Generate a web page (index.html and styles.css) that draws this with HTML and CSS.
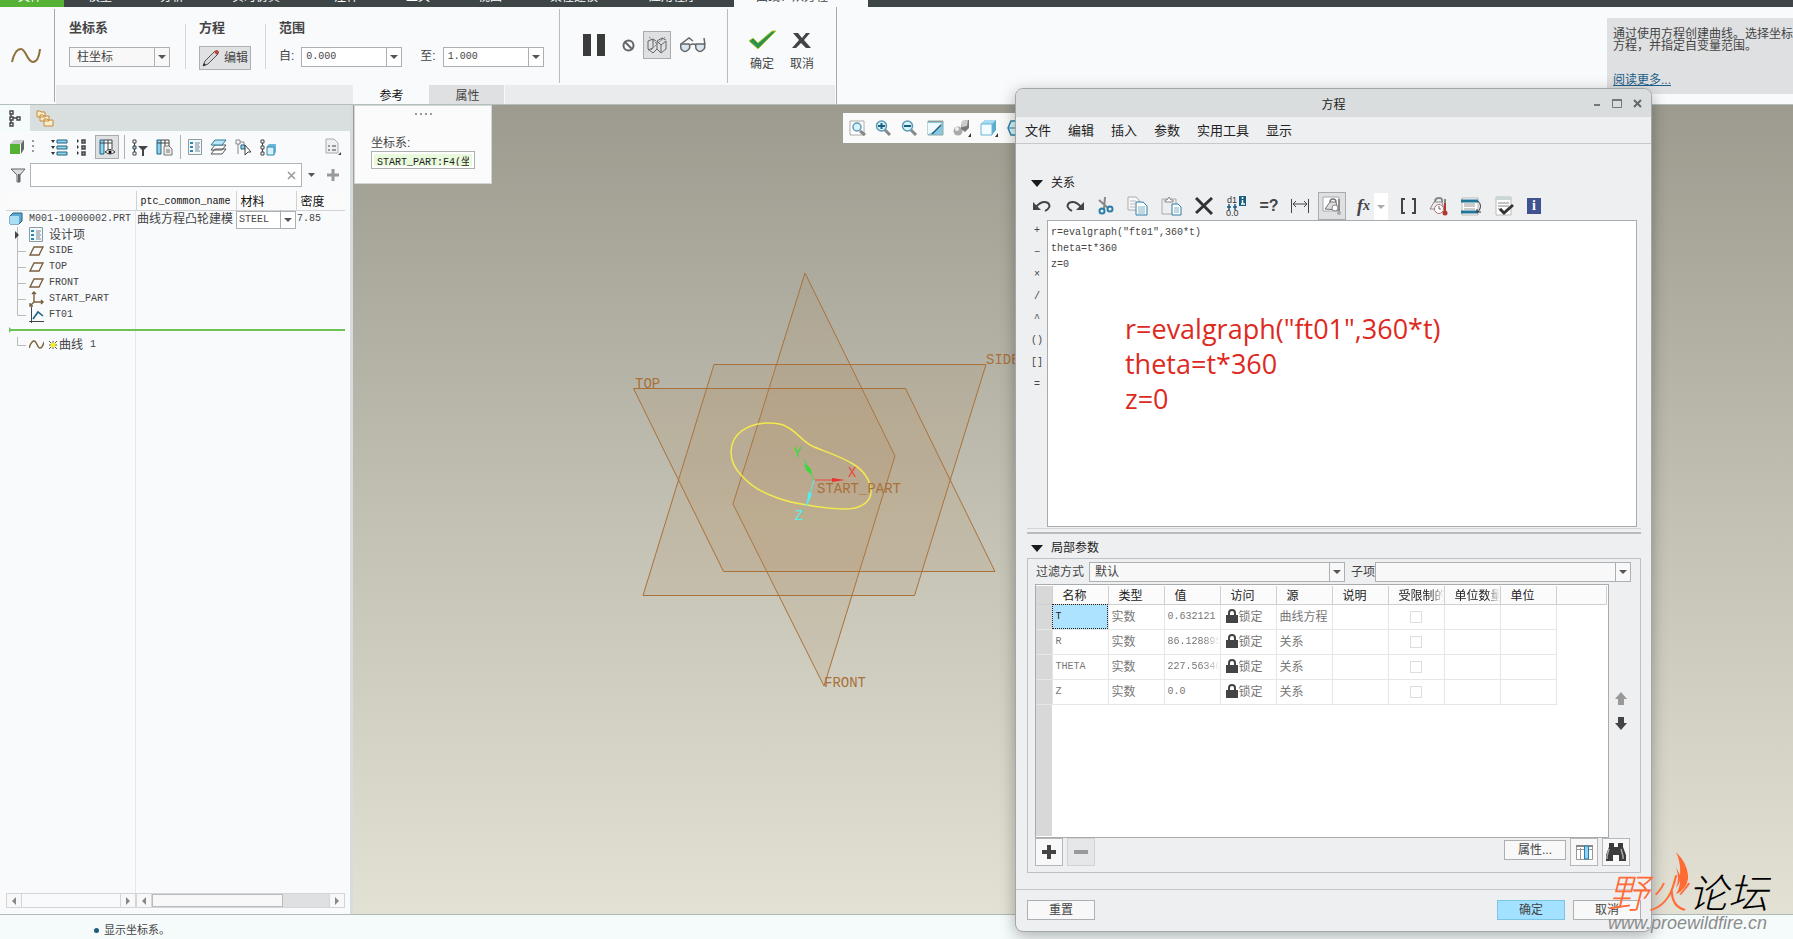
FILE: index.html
```html
<!DOCTYPE html>
<html lang="zh-CN">
<head>
    <meta charset="UTF-8">
    <meta name="viewport" content="width=device-width, initial-scale=1.0">
    <title>曲线：从方程</title>
    <link rel="stylesheet" href="styles.css">
</head>
<body>

<nav class="topbar">
    <a class="top-file" href="#">文件</a>
    <a href="#">模型</a>
    <a href="#">分析</a>
    <a href="#">实时仿真</a>
    <a href="#">注释</a>
    <a href="#">工具</a>
    <a href="#">视图</a>
    <a href="#">柔性建模</a>
    <a href="#">应用程序</a>
    <a class="top-active" href="#">曲线：从方程</a>
</nav>

<header class="ribbon">
    <div class="ribbon-logo">
        <svg width="30" height="16" viewBox="0 0 30 16"><path d="M1 14C3 5 6 1 10 1c5 0 6 13 12 13 4 0 6-4 7-13" fill="none" stroke="#8f6f3c" stroke-width="2"/></svg>
    </div>
    <div class="ribbon-body">
        <div class="groups">
            <div class="group">
                <label class="group-title" for="csys">坐标系</label>
                <div class="group-row">
                    <span class="combo combo-plain"><select id="csys"><option>柱坐标</option></select></span>
                </div>
            </div>
            <div class="group">
                <span class="group-title">方程</span>
                <div class="group-row">
                    <button class="edit-btn" type="button">
                        <svg width="18" height="18" viewBox="0 0 18 18"><path d="M1 17l2-5L13 2l3 3L6 15z" fill="#d8d8d8" stroke="#555"/><path d="M12 3l2-2q3 0 3 3l-2 2z" fill="#b8453a"/><path d="M1 17l1-3 2 2z" fill="#222"/></svg>
                        编辑
                    </button>
                </div>
            </div>
            <div class="group">
                <span class="group-title">范围</span>
                <div class="group-row">
                    <label for="from">自:</label>
                    <span class="combo"><select id="from" class="mono"><option>0.000</option></select></span>
                    <label class="to-label" for="to">至:</label>
                    <span class="combo"><select id="to" class="mono"><option>1.000</option></select></span>
                </div>
            </div>
            <div class="run-group">
                <button class="icon-btn" type="button" aria-label="暂停"><svg width="24" height="22" viewBox="0 0 24 22"><path d="M1 0h8v22H1zM15 0h8v22h-8z" fill="#3b3b3b"/></svg></button>
                <button class="icon-btn" type="button" aria-label="无预览"><svg width="13" height="13" viewBox="0 0 13 13"><g fill="none" stroke="#666" stroke-width="2"><circle cx="6.5" cy="6.5" r="5"/><path d="M3 3l7 7"/></g></svg></button>
                <button class="icon-btn pressed" type="button" aria-label="预览"><svg width="20" height="18" viewBox="0 0 20 18"><g fill="none" stroke="#666"><path d="M1 5l5-2 3 2M1 5v8l5 4 4-4M6 3v9l-5 2M10 5l5-3 4 2M10 5v8l4 4 5-4V5M14 17V9M10 5l4 4 5-4"/><path d="M2 1l8 7 8-7M4 14l12-12" stroke-dasharray="1 1"/></g></svg></button>
                <button class="icon-btn" type="button" aria-label="检查"><svg width="28" height="16" viewBox="0 0 28 16"><g fill="#d9e6ef" stroke="#666" stroke-width="1.5"><path d="M2 7h8q2 4-1 6-3 3-6 0-2-2-1-6zM17 7h8q2 4-1 6-3 3-6 0-2-2-1-6z"/><path d="M2 7l8-6 4 3M11 8q3-2 6 0M26 8l-1-7" fill="none"/></g></svg></button>
            </div>
            <div class="ok-group">
                <button class="tall-btn" type="button">
                    <svg width="30" height="20" viewBox="0 0 30 20"><path d="M2 11l4-3 5 5L25 1h4L11 19z" fill="#2f9150" stroke="#b6cc33"/></svg>
                    确定
                </button>
                <button class="tall-btn" type="button">
                    <svg width="22" height="20" viewBox="0 0 22 20"><path d="M2 3h5l4 5 4-5h4l-6 7 7 8h-5l-5-5-5 5H1l7-8z" fill="#444"/></svg>
                    取消
                </button>
            </div>
        </div>
        <div class="tabstrip">
            <button class="tab tab-on" type="button">参考</button>
            <button class="tab" type="button">属性</button>
        </div>
    </div>
    <aside class="help">
        <p>通过使用方程创建曲线。选择坐标<br>方程，并指定自变量范围。</p>
        <a href="#">阅读更多...</a>
    </aside>
</header>

<main class="workspace">
    <section class="tree-panel">
        <div class="tree-tabs">
            <button class="tree-tab tree-tab-on" type="button" aria-label="模型树"><svg width="12" height="17" viewBox="0 0 12 17"><g fill="none" stroke="#444" stroke-width="1.4"><path d="M1 1h3v3H1zM1 7h3v3H1zM1 13h3v3H1zM8 7h3v3H8zM4 8h4M2 4v3M2 10v3"/></g></svg></button>
            <button class="tree-tab" type="button" aria-label="文件夹"><svg width="18" height="17" viewBox="0 0 18 17"><g fill="#fdeccb" stroke="#c08b3e"><path d="M1 1h3l1 1h4v5H1zM4 5h3l1 1h5v5H4zM8 9h3l1 1h5v6H8z"/></g></svg></button>
        </div>
        <div class="tree-tools">
            <svg width="14" height="14" viewBox="0 0 14 14"><path d="M0 4l4-4h10l-3 4z" fill="#ccc"/><path d="M11 4l3-4v9l-3 5z" fill="#666"/><path d="M0 4h10v10H0z" fill="#55b234"/></svg>
            <svg width="4" height="16" viewBox="0 0 4 16"><path d="M2 1v15" stroke="#999" stroke-width="2" stroke-dasharray="2 3"/></svg>
            <button class="icon-btn push" type="button" aria-label="全部展开"><svg width="17" height="17" viewBox="0 0 17 17"><path d="M6 1h10v3H6zM6 7h10v3H6zM6 13h10v3H6z" fill="#8ed4f2" stroke="#24607c"/><path d="M0 1h4L2 4zM0 7h4l-2 3zM0 13h4l-2 3z" fill="#333"/></svg></button>
            <button class="icon-btn" type="button" aria-label="全部折叠"><svg width="11" height="17" viewBox="0 0 11 17"><path d="M6 1h3v3H6zM6 7h3v3H6zM6 13h3v3H6z" fill="#aaa" stroke="#444" stroke-width="1.5"/><path d="M1 0l2 2-2 2zM1 6l2 2-2 2zM1 12l2 2-2 2z" fill="#333"/></svg></button>
            <button class="icon-btn pressed" type="button" aria-label="树列"><svg width="17" height="17" viewBox="0 0 17 17"><path d="M1 1h12v14H1z" fill="#fff"/><path d="M1 1h4v14H1z" fill="#8ed4f2" stroke="#24607c"/><path d="M5 1h8v9M9 1v10M1 4h12" fill="none" stroke="#444"/><path d="M6 13q5-5 10 0-5 4-10 0z" fill="#eee" stroke="#333"/><circle cx="11" cy="13" r="1.5"/></svg></button>
            <i class="vline"></i>
            <button class="icon-btn" type="button" aria-label="树过滤器"><svg width="16" height="17" viewBox="0 0 16 17"><g fill="#fff" stroke="#444"><path d="M1 1h3v3H1zM1 13h3v3H1zM2.5 4v3M2.5 10v3"/><path d="M1 7h3v3H1z" fill="#8ed4f2"/></g><path d="M6 7h10l-4 4v6h-2v-6z" fill="#444"/></svg></button>
            <button class="icon-btn" type="button" aria-label="列设置"><svg width="17" height="17" viewBox="0 0 17 17"><path d="M1 1h12v13H1z" fill="#fff"/><path d="M1 1h4v14H1z" fill="#8ed4f2" stroke="#24607c"/><path d="M5 1h8v6M9 1v6M1 4h12" fill="none" stroke="#444"/><path d="M8 7h5l3 3v6H8z" fill="#eee" stroke="#777"/><path d="M10 11h4M10 13h4" stroke="#777"/></svg></button>
            <i class="vline"></i>
            <button class="icon-btn" type="button" aria-label="设计项"><svg width="14" height="16" viewBox="0 0 14 16"><path d="M.5.5h13v15H.5z" fill="#f4f8f9" stroke="#8b9ba3"/><path d="M2 3h3v2H2zM2 7h3v2H2zM2 11h3v2H2z" fill="#2c88b5"/><path d="M7 4h5M7 6h4M7 8h5M7 10h4M7 12h5" stroke="#789"/></svg></button>
            <button class="icon-btn" type="button" aria-label="层"><svg width="17" height="16" viewBox="0 0 17 16"><g fill="#fff" stroke="#555"><path d="M5 10h11l-4 5H1zM5 6h11l-4 5H1z"/><path d="M5 1h11l-4 5H1z" fill="#bce6f8" stroke="#2c7c9d"/></g></svg></button>
            <button class="icon-btn" type="button" aria-label="选择"><svg width="17" height="17" viewBox="0 0 17 17"><g fill="none" stroke="#888"><path d="M1 1h4v4H1zM3 5v10M5 3h4v3"/></g><path d="M6 6h4v4H6z" fill="#8ed4f2" stroke="#24607c"/><path d="M10 6v10l3-3h3z" fill="#fff" stroke="#444"/></svg></button>
            <button class="icon-btn" type="button" aria-label="零件"><svg width="17" height="17" viewBox="0 0 17 17"><g fill="none" stroke="#444"><path d="M1 1h3v3H1zM1 7h3v3H1zM1 13h3v3H1zM2.5 4v3M2.5 10v3"/></g><path d="M7 7l2-2h7v8l-2 3H7z" fill="#6db8da"/><path d="M7 8h7v8H7z" fill="#d8f1fb" stroke="#3188ad"/></svg></button>
            <button class="icon-btn last" type="button" aria-label="显示"><svg width="17" height="18" viewBox="0 0 17 18"><path d="M1 1h8l4 4v10H1z" fill="#eef0f1" stroke="#aaa"/><path d="M3 8h2M3 12h2M7 8h4M7 12h4" stroke="#999" stroke-width="2"/><path d="M16 14v3h-3z" fill="#444"/></svg></button>
        </div>
        <div class="tree-filter">
            <svg width="16" height="15" viewBox="0 0 16 15"><path d="M1 1h14l-5 6v7H7V7z" fill="#ddd" stroke="#666"/><path d="M8 6h2v8H8z" fill="#666"/></svg>
            <span class="filter-box"><input type="text" aria-label="过滤"><button class="icon-btn" type="button" aria-label="清除"><svg width="9" height="9" viewBox="0 0 9 9"><path d="M1 1l7 7M8 1L1 8" stroke="#999" stroke-width="1.5"/></svg></button></span>
            <svg width="7" height="5" viewBox="0 0 7 5"><path d="M0 0h7L3.5 4z" fill="#555"/></svg>
            <svg width="12" height="12" viewBox="0 0 12 12"><path d="M6 0v12M0 6h12" stroke="#999" stroke-width="3"/></svg>
        </div>
        <div class="tree-body">
            <table class="tree">
                <colgroup><col class="c-name"><col class="c-common"><col class="c-mat"><col></colgroup>
                <thead>
                <tr><th></th><th class="mono">ptc_common_name</th><th>材料</th><th>密度</th></tr>
                </thead>
                <tbody>
                <tr>
                    <td class="mono root"><div><svg width="14" height="13" viewBox="0 0 14 13"><path d="M1 4l3-3h9v8l-3 3H1z" fill="#5aa9cf" stroke="#24607c"/><path d="M1 4h9v8H1z" fill="#a9def5"/></svg>M001-10000002.PRT</div></td>
                    <td>曲线方程凸轮建模</td>
                    <td class="mat"><span class="combo"><select class="mono" aria-label="材料"><option>STEEL</option></select></span></td>
                    <td class="mono">7.85</td>
                </tr>
                <tr><td colspan="4"><div class="node"><svg class="branch" width="12" height="16" viewBox="0 0 12 16"><path d="M3.5 0v16" stroke="#bbb"/><path d="M1 4l4 4-4 4z" fill="#444"/></svg><svg width="15" height="15" viewBox="0 0 15 15"><path d="M.5.5h13v14H.5z" fill="#f4f8f9" stroke="#8b9ba3"/><path d="M2 3h3v2H2zM2 7h3v2H2zM2 11h3v2H2z" fill="#2c88b5"/><path d="M7 4h5M7 6h4M7 8h5M7 10h4M7 12h5" stroke="#789"/></svg>设计项</div></td></tr>
                <tr><td colspan="4" class="mono"><div class="node"><svg class="branch" width="12" height="16" viewBox="0 0 12 16"><path d="M3.5 0v16M3.5 8.5H12" fill="none" stroke="#bbb"/></svg><svg width="15" height="12" viewBox="0 0 15 12"><path d="M1 10l4-8h9l-4 8z" fill="none" stroke="#7b603c" stroke-width="1.4"/></svg>SIDE</div></td></tr>
                <tr><td colspan="4" class="mono"><div class="node"><svg class="branch" width="12" height="16" viewBox="0 0 12 16"><path d="M3.5 0v16M3.5 8.5H12" fill="none" stroke="#bbb"/></svg><svg width="15" height="12" viewBox="0 0 15 12"><path d="M1 10l4-8h9l-4 8z" fill="none" stroke="#7b603c" stroke-width="1.4"/></svg>TOP</div></td></tr>
                <tr><td colspan="4" class="mono"><div class="node"><svg class="branch" width="12" height="16" viewBox="0 0 12 16"><path d="M3.5 0v16M3.5 8.5H12" fill="none" stroke="#bbb"/></svg><svg width="15" height="12" viewBox="0 0 15 12"><path d="M1 10l4-8h9l-4 8z" fill="none" stroke="#7b603c" stroke-width="1.4"/></svg>FRONT</div></td></tr>
                <tr><td colspan="4" class="mono"><div class="node"><svg class="branch" width="12" height="16" viewBox="0 0 12 16"><path d="M3.5 0v16M3.5 8.5H12" fill="none" stroke="#bbb"/></svg><svg width="15" height="16" viewBox="0 0 15 16"><path d="M5 1v10h9M5 11l-4 4M3 3l2-2 2 2M12 9l2 2-2 2M1 12v3h3" fill="none" stroke="#7b603c" stroke-width="1.4"/></svg>START_PART</div></td></tr>
                <tr><td colspan="4" class="mono"><div class="node"><svg class="branch" width="12" height="16" viewBox="0 0 12 16"><path d="M3.5 0v8.5H12" fill="none" stroke="#bbb"/></svg><svg width="15" height="16" viewBox="0 0 15 16"><path d="M2.5 0v16M0 14.5h15" stroke="#444"/><path d="M4 12l5-7 5 4" fill="none" stroke="#1d6384" stroke-width="1.6"/></svg>FT01</div></td></tr>
                <tr class="insert-row"><td colspan="4"><div class="insert-line"></div></td></tr>
                <tr><td colspan="4"><div class="node"><svg class="branch" width="12" height="16" viewBox="0 0 12 16"><path d="M3.5 0v8.5H12" fill="none" stroke="#bbb"/></svg><svg width="15" height="10" viewBox="0 0 15 10"><path d="M0 8C2 2 4 1 5 1c3 0 3 7 6 7 2 0 3-2 4-6" fill="none" stroke="#7b603c" stroke-width="1.4"/></svg><span class="new-curve"><svg width="8" height="8" viewBox="0 0 8 8"><path d="M0 0l8 8M8 0L0 8M4 0v8M0 4h8" stroke="#555"/><circle cx="4" cy="4" r="2.5" fill="#f6ee22"/></svg>曲线 <span class="mono">1</span></span></div></td></tr>
                </tbody>
            </table>
        </div>
        <div class="scrollbars">
            <div class="sb sb-off"><i class="sb-left"></i><b></b><i class="sb-right"></i></div>
            <div class="sb"><i class="sb-left"></i><b><span></span></b><i class="sb-right"></i></div>
        </div>
    </section>

    <section class="viewport">
        <svg class="scene" width="100%" height="100%">
            <!-- datum planes -->
            <g transform="translate(-353 -105)">
                <g fill="#b5824c" fill-opacity=".13" stroke="#a9713a">
                    <path d="M805 273l90 183-71 230-91-182z"/>
                    <path d="M714 364.5h272l-71.5 231H643z"/>
                    <path d="M633.5 388.5h272l89.5 183H723.5z"/>
                </g>
                <path d="M768 423C776 423 783 424 787 427C796 431 801 440 812 446C823 451 840 456 853 464C863 470 871 480 871 492C871 501 862 509 845 509C830 509 818 507 807 505C793 503 781 500 770 495C757 490 749 484 742 476C735 469 731 461 731 452C731 433 749 423 768 423Z" fill="none" stroke="#f3e84f" stroke-width="1.5"/>
                <path d="M815 480h20" stroke="#e8483c"/><path d="M832 478l13 2-13 2z" fill="#e8342a"/>
                <path d="M814 480l-10-21" stroke="#35dd3a" stroke-dasharray="2 1"/><path d="M804 463l7 6 1 6-6-5z" fill="#35dd3a"/>
                <path d="M814 480l-8 26" stroke="#4ff0ee"/><path d="M808 492l4 2-5 12z" fill="#4ff0ee"/>
                <g class="labels">
                    <text x="635" y="388">TOP</text>
                    <text x="986" y="364">SIDE</text>
                    <text x="824" y="687">FRONT</text>
                    <text x="817" y="493">START_PART</text>
                    <text x="793" y="457" class="ax-y">Y</text>
                    <text x="848" y="477" class="ax-x">X</text>
                    <text x="795" y="520" class="ax-z">Z</text>
                </g>
            </g>
        </svg>

        <div class="ref-panel">
            <svg width="17" height="2" viewBox="0 0 17 2"><path d="M0 1h17" stroke="#999" stroke-width="2" stroke-dasharray="2 3"/></svg>
            <label for="refcsys">坐标系:</label>
            <input id="refcsys" class="mono" type="text" value="START_PART:F4(坐">
        </div>

        <div class="view-tools">
            <button class="icon-btn" type="button" aria-label="重新调整"><svg width="17" height="16" viewBox="0 0 17 16"><path d="M1 1h14v14H1z" fill="#fff" stroke="#aaa"/><path d="M11 11l5 4" stroke="#888" stroke-width="3"/><circle cx="8" cy="7" r="4" fill="#d9f3fc" stroke="#5a99b5" stroke-width="1.5"/></svg></button>
            <button class="icon-btn" type="button" aria-label="放大"><svg width="17" height="16" viewBox="0 0 17 16"><path d="M10 10l5 5" stroke="#888" stroke-width="3"/><circle cx="6.5" cy="6" r="5" fill="#d9f3fc" stroke="#5a99b5" stroke-width="1.5"/><path d="M3 6h7M6.5 3v6" stroke="#1c5e80" stroke-width="2"/></svg></button>
            <button class="icon-btn" type="button" aria-label="缩小"><svg width="17" height="16" viewBox="0 0 17 16"><path d="M10 10l5 5" stroke="#888" stroke-width="3"/><circle cx="6.5" cy="6" r="5" fill="#d9f3fc" stroke="#5a99b5" stroke-width="1.5"/><path d="M3 6h7" stroke="#1c5e80" stroke-width="2"/></svg></button>
            <button class="icon-btn" type="button" aria-label="重画"><svg width="17" height="16" viewBox="0 0 17 16"><path d="M1 1h15v14H1z" fill="#8cc6de" stroke="#8aa"/><path d="M1 3h13Q13 9 2 14H1z" fill="#eefaff"/><path d="M1 1.500h15" stroke="#999"/><path d="M5 14l9-9" stroke="#1c5e80" stroke-width="1.5"/></svg></button>
            <button class="icon-btn" type="button" aria-label="渲染"><svg width="18" height="18" viewBox="0 0 18 18"><circle cx="5" cy="12" r="4.5" fill="#aaa"/><circle cx="4" cy="10" r="2" fill="#eee"/><path d="M9 2l7-1v8l-4 4-4-3z" fill="#777"/><path d="M9 2l6-1-1 6-5 1z" fill="#ccc"/><path d="M18 14v4h-3z" fill="#333"/></svg></button>
            <button class="icon-btn" type="button" aria-label="显示样式"><svg width="18" height="18" viewBox="0 0 18 18"><path d="M1 5l4-4h11v10l-4 5H1z" fill="#5eaccf"/><path d="M1 5l4-4h11l-4 4z" fill="#a6dbf1"/><path d="M1 5h11v11H1z" fill="#f2fbff" stroke="#68b6d6"/><path d="M18 14v4h-3z" fill="#333"/></svg></button>
            <button class="icon-btn" type="button" aria-label="视图"><svg width="18" height="16" viewBox="0 0 18 16"><path d="M4 1h12v14H4L1 8z" fill="#d9f3fc" stroke="#2e84a9" stroke-width="1.5"/><path d="M1 8h17" stroke="#2e84a9"/></svg></button>
        </div>
    </section>
</main>

<footer class="status"><i></i>显示坐标系。</footer>

<section class="dialog">
    <div class="dlg-title">
        <span>方程</span>
        <div class="dlg-win">
            <svg width="8" height="10" viewBox="0 0 8 10"><path d="M1 6h6" stroke="#777" stroke-width="2"/></svg>
            <svg width="10" height="9" viewBox="0 0 10 9"><path d="M.5 1v7.5h9V1" fill="none" stroke="#777"/><path d="M0 1h10" stroke="#777" stroke-width="2"/></svg>
            <svg width="9" height="9" viewBox="0 0 9 9"><path d="M1 1l7 7M8 1L1 8" stroke="#666" stroke-width="2"/></svg>
        </div>
    </div>
    <nav class="dlg-menu"><a href="#">文件</a><a href="#">编辑</a><a href="#">插入</a><a href="#">参数</a><a href="#">实用工具</a><a href="#">显示</a></nav>

    <div class="dlg-content">
        <h2 class="sec sec-rel"><svg width="12" height="7" viewBox="0 0 12 7"><path d="M0 0h12L6 7z" fill="#1a1a1a"/></svg>关系</h2>
        <div class="rel-tools">
            <button class="icon-btn" type="button" aria-label="撤消"><svg width="20" height="14" viewBox="0 0 20 14"><path d="M4 8q6-7 12-4 4 4-3 8" fill="none" stroke="#444" stroke-width="2"/><path d="M1 3v8h8z" fill="#444"/></svg></button>
            <button class="icon-btn" type="button" aria-label="重做"><svg width="20" height="14" viewBox="0 0 20 14"><path d="M16 8q-6-7-12-4-4 4 3 8" fill="none" stroke="#444" stroke-width="2"/><path d="M19 3v8h-8z" fill="#444"/></svg></button>
            <button class="icon-btn" type="button" aria-label="剪切"><svg width="16" height="18" viewBox="0 0 16 18"><path d="M1 3l9 8M7 0L6 12" stroke="#888" stroke-width="2"/><g fill="none" stroke="#2a7da6" stroke-width="2"><circle cx="4" cy="14" r="2.5"/><circle cx="12" cy="12" r="2.5"/></g></svg></button>
            <button class="icon-btn" type="button" aria-label="复制"><svg width="21" height="20" viewBox="0 0 21 20"><path d="M1 1h8l3 3v10H1z" fill="#f8f8f8" stroke="#aaa"/><path d="M3 5h6M3 8h5M3 11h5" stroke="#bbb"/><path d="M9 6h7l4 4v9H9z" fill="#fff" stroke="#2a7da6"/><path d="M11 11h7M11 13h7M11 15h7M11 17h7" stroke="#7fb2ca"/></svg></button>
            <button class="icon-btn" type="button" aria-label="粘贴"><svg width="21" height="20" viewBox="0 0 21 20"><path d="M1 3h14v15H1z" fill="#eee" stroke="#aaa"/><path d="M4 4h2l2-3 2 3h2v2H4z" fill="#fff" stroke="#888"/><path d="M11 8h6l3 3v8h-9z" fill="#fff" stroke="#2a7da6"/><path d="M13 12h5M13 14h5M13 16h5" stroke="#7fb2ca"/></svg></button>
            <button class="icon-btn" type="button" aria-label="删除"><svg width="18" height="18" viewBox="0 0 18 18"><path d="M1 1l16 16M17 1L1 16" stroke="#333" stroke-width="3"/></svg></button>
            <button class="icon-btn" type="button" aria-label="切换尺寸"><svg width="21" height="20" viewBox="0 0 21 20"><text x="1" y="7" class="svg-s">d1</text><text x="0" y="20" class="svg-s">0.0</text><path d="M3 8v6M9 8v6M1 11h4M7 11h4" stroke="#1c5e80" stroke-width="1.5"/><path d="M13 0h7v10h-7z" fill="#1c5e80"/><path d="M15 8h4M16.5 4v4M16.5 1v2" stroke="#fff" stroke-width="1.5"/></svg></button>
            <button class="icon-btn eq" type="button">=?</button>
            <button class="icon-btn" type="button" aria-label="尺寸"><svg width="18" height="16" viewBox="0 0 18 16"><path d="M.5 1v14M17.5 1v14M2 6h14M5 3L2 6l3 3M13 3l3 3-3 3" fill="none" stroke="#444"/></svg></button>
            <button class="icon-btn pressed" type="button" aria-label="单位"><svg width="20" height="20" viewBox="0 0 20 20"><path d="M1 1h16v14H1z" fill="#fff" stroke="#aaa"/><path d="M3 13L8 6h6l2 8z" fill="#ddd" stroke="#777"/><path d="M8 6q0-3 3-3t3 3M17 3v13" fill="none" stroke="#777" stroke-width="1.5"/><circle cx="13" cy="12" r="3" fill="#fff" stroke="#888"/><circle cx="17" cy="17" r="2" fill="#aaa"/></svg></button>
            <span class="fx"><button class="icon-btn" type="button">f<small>x</small></button><svg width="14" height="27" viewBox="0 0 14 27"><path d="M0 0h14v27H0z" fill="#fff"/><path d="M3 12h8l-4 4z" fill="#aaa"/></svg></span>
            <button class="icon-btn" type="button" aria-label="括号"><svg width="15" height="16" viewBox="0 0 15 16"><path d="M4 1H1v14h3M11 1h3v14h-3" fill="none" stroke="#444" stroke-width="2"/></svg></button>
            <button class="icon-btn" type="button" aria-label="单位转换"><svg width="19" height="19" viewBox="0 0 19 19"><path d="M1 12l4-7h8l2 7z" fill="#eee" stroke="#888"/><path d="M6 5q0-4 4-4t3 4M16 2v5" fill="none" stroke="#888" stroke-width="2"/><circle cx="10" cy="12" r="4.5" fill="#fff" stroke="#a77"/><path d="M10 9v3h2" fill="none" stroke="#666"/><path d="M16 6v10" stroke="#b5382c" stroke-width="2"/><circle cx="16" cy="16" r="2.5" fill="#b5382c"/></svg></button>
            <button class="icon-btn" type="button" aria-label="排序"><svg width="21" height="19" viewBox="0 0 21 19"><path d="M1 1h16v17H1z" fill="#fff" stroke="#bbb"/><path d="M0 4h17M0 15h17" stroke="#1f7595" stroke-width="3"/><path d="M3 7h11M3 9h11M3 12h11" stroke="#999"/><path d="M17 4q5 5 0 11M16 12v3h4" fill="none" stroke="#333"/></svg></button>
            <button class="icon-btn" type="button" aria-label="校验"><svg width="19" height="20" viewBox="0 0 19 20"><path d="M1 1h15v18H1z" fill="#fff" stroke="#bbb"/><path d="M1 1h15v3H1z" fill="#ccd6d8"/><path d="M3 7h11M3 10h11M3 13h4" stroke="#888"/><path d="M5 13l4 4 9-8" fill="none" stroke="#333" stroke-width="3"/></svg></button>
            <button class="icon-btn info" type="button">i</button>
        </div>
        <div class="editor">
            <div class="ops"><button type="button">+</button><button type="button">−</button><button type="button">×</button><button type="button">/</button><button type="button">^</button><button type="button">()</button><button type="button">[]</button><button type="button">=</button></div>
            <textarea class="mono" aria-label="关系" spellcheck="false">r=evalgraph("ft01",360*t)
theta=t*360
z=0</textarea>
            <div class="note">r=evalgraph("ft01",360*t)<br>theta=t*360<br>z=0</div>
        </div>
        <div class="splitter"></div>
        <h2 class="sec sec-par"><svg width="12" height="7" viewBox="0 0 12 7"><path d="M0 0h12L6 7z" fill="#1a1a1a"/></svg>局部参数</h2>
        <div class="params">
            <div class="filters">
                <label for="filter">过滤方式</label>
                <span class="combo combo-plain"><select id="filter"><option>默认</option></select></span>
                <label class="child-label" for="child">子项</label>
                <span class="combo combo-plain"><select id="child"><option></option></select></span>
            </div>
            <div class="grid-row">
                <div class="grid-box">
                    <table class="grid">
                        <colgroup><col class="g-gut"><col class="g-c" span="9"><col></colgroup>
                        <thead>
                        <tr><th class="gut"></th><th>名称</th><th>类型</th><th>值</th><th>访问</th><th>源</th><th>说明</th><th><div class="fade">受限制的</div></th><th><div class="fade">单位数量</div></th><th>单位</th><th></th></tr>
                        </thead>
                        <tbody>
                        <tr><td class="gut"></td><td class="mono sel">T</td><td>实数</td><td class="mono">0.632121</td><td><svg class="lock" width="12" height="14" viewBox="0 0 12 14"><path d="M3 7V4q0-3 3-3t3 3v3" fill="none" stroke="#444" stroke-width="2"/><path d="M0 6h12v8H0z" fill="#444"/></svg>锁定</td><td>曲线方程</td><td></td><td class="chk"><input type="checkbox" disabled aria-label="受限制的"></td><td></td><td></td><td class="rest"></td></tr>
                        <tr><td class="gut"></td><td class="mono">R</td><td>实数</td><td class="mono"><div class="fade">86.128895</div></td><td><svg class="lock" width="12" height="14" viewBox="0 0 12 14"><path d="M3 7V4q0-3 3-3t3 3v3" fill="none" stroke="#444" stroke-width="2"/><path d="M0 6h12v8H0z" fill="#444"/></svg>锁定</td><td>关系</td><td></td><td class="chk"><input type="checkbox" disabled aria-label="受限制的"></td><td></td><td></td><td class="rest"></td></tr>
                        <tr><td class="gut"></td><td class="mono">THETA</td><td>实数</td><td class="mono"><div class="fade">227.563402</div></td><td><svg class="lock" width="12" height="14" viewBox="0 0 12 14"><path d="M3 7V4q0-3 3-3t3 3v3" fill="none" stroke="#444" stroke-width="2"/><path d="M0 6h12v8H0z" fill="#444"/></svg>锁定</td><td>关系</td><td></td><td class="chk"><input type="checkbox" disabled aria-label="受限制的"></td><td></td><td></td><td class="rest"></td></tr>
                        <tr><td class="gut"></td><td class="mono">Z</td><td>实数</td><td class="mono">0.0</td><td><svg class="lock" width="12" height="14" viewBox="0 0 12 14"><path d="M3 7V4q0-3 3-3t3 3v3" fill="none" stroke="#444" stroke-width="2"/><path d="M0 6h12v8H0z" fill="#444"/></svg>锁定</td><td>关系</td><td></td><td class="chk"><input type="checkbox" disabled aria-label="受限制的"></td><td></td><td></td><td class="rest"></td></tr>
                        </tbody>
                    </table>
                </div>
                <div class="movers">
                    <button class="icon-btn" type="button" aria-label="上移"><svg width="12" height="13" viewBox="0 0 12 13"><path d="M6 0l6 7H9v6H3V7H0z" fill="#999"/></svg></button>
                    <button class="icon-btn" type="button" aria-label="下移"><svg width="12" height="13" viewBox="0 0 12 13"><path d="M6 13l6-7H9V0H3v6H0z" fill="#444"/></svg></button>
                </div>
            </div>
            <div class="grid-tools">
                <button class="sq" type="button" aria-label="添加"><svg width="14" height="14" viewBox="0 0 14 14"><path d="M7 0v14M0 7h14" stroke="#444" stroke-width="4"/></svg></button>
                <button class="sq sq-off" type="button" aria-label="移除" disabled><svg width="14" height="14" viewBox="0 0 14 14"><path d="M0 7h14" stroke="#999" stroke-width="4"/></svg></button>
                <button class="btn props" type="button">属性...</button>
                <button class="sq" type="button" aria-label="列"><svg width="17" height="15" viewBox="0 0 17 15"><path d="M.5.5h16v14H.5z" fill="#fff" stroke="#999"/><path d="M0 1h17" stroke="#888" stroke-width="2"/><path d="M0 4.500h17M4.500 3v12" stroke="#999"/><path d="M8.500 1h4v13h-4z" fill="#8ed4f2" stroke="#2a7da6"/></svg></button>
                <button class="sq sq-find" type="button" aria-label="查找"><svg width="20" height="18" viewBox="0 0 20 18"><path d="M3 0h5v4h4V0h5v4l3 8v6h-7v-6H7v6H0v-6l3-8z" fill="#3c3c3c"/><path d="M3 6l-2 7v3M15 6l2 7v3" stroke="#aaa" stroke-width="1.5" fill="none"/></svg></button>
            </div>
        </div>
    </div>
    <div class="dlg-foot">
        <button class="btn" type="button">重置</button>
        <button class="btn btn-ok" type="button">确定</button>
        <button class="btn" type="button">取消</button>
    </div>
</section>

<div class="watermark">
    <div class="wm-name"><span>野火</span>论坛</div>
    <svg class="flame" width="16" height="42" viewBox="0 0 16 42"><path d="M4 0q13 13 12 27-2 11-12 15 4-6 4-13-2 5-4 7 4-10 0-21l4 8Q9 11 4 0z" fill="#ff6b35"/></svg>
    <div class="wm-url">www.proewildfire.cn</div>
</div>

</body>
</html>
```
FILE: styles.css
```css
* {
    box-sizing: border-box;
}
body {
    margin: 0;
    height: 100vh;
    display: flex;
    flex-direction: column;
    overflow: hidden;
    position: relative;
    background: #f8fafc;
    color: #444;
    font-family: "Liberation Sans", "Noto Sans CJK SC", sans-serif;
    font-size: 12px;
    line-height: 16px;
}
svg {
    display: block;
    flex: none;
}
button, select, input, textarea {
    font: inherit;
    color: inherit;
}
button {
    padding: 0;
    cursor: pointer;
}
.mono {
    font-family: "Liberation Mono", "Noto Sans CJK SC", monospace;
    font-size: 10px;
}
.icon-btn {
    border: 0;
    background: none;
    display: flex;
    align-items: center;
    justify-content: center;
}
.pressed {
    background: #dfe0e2;
    border: 1px solid #a9abad;
}

/* 下拉框 */
.combo {
    position: relative;
    display: block;
    width: 101px;
    height: 20px;
}
.combo select {
    appearance: none;
    width: 100%;
    height: 100%;
    padding: 0 20px 0 4px;
    border: 1px solid #adb0b3;
    border-radius: 0;
    background: #fff;
}
.combo-plain select {
    padding-left: 7px;
    background: #f8f8f8;
}
.combo::before {
    content: "";
    position: absolute;
    right: 15px;
    top: 0;
    bottom: 0;
    border-left: 1px solid #adb0b3;
}
.combo::after {
    content: "";
    position: absolute;
    right: 4px;
    top: 8px;
    border: 4px solid transparent;
    border-top-color: #555;
    border-bottom: 0;
    pointer-events: none;
}

/* 顶部菜单 */
.topbar {
    flex: none;
    height: 7px;
    display: flex;
    align-items: flex-end;
    overflow: hidden;
    background: #3d4546;
}
.topbar a {
    flex: none;
    width: 72px;
    padding-left: 24px;
    color: #fff;
    text-decoration: none;
    white-space: nowrap;
    line-height: 20px;
}
.topbar a:nth-child(4) {
    width: 102px;
}
.topbar a:nth-child(8), .topbar a:nth-child(9) {
    width: 99px;
}
.topbar .top-file {
    width: 64px;
    padding-left: 18px;
    background: #55b234;
}
.topbar .top-active {
    width: 134px;
    margin-left: 10px;
    padding-left: 22px;
    background: #f8fafc;
    color: #444;
}

/* 功能区 */
.ribbon {
    flex: none;
    height: 98px;
    display: flex;
    border-bottom: 1px solid #b3bfbd;
}
.ribbon-logo {
    width: 55px;
    margin: 2px 0;
    padding: 39px 12px 0 11px;
    border-right: 1px solid #aaa;
}
.ribbon-body {
    width: 782px;
    display: flex;
    flex-direction: column;
    border-right: 1px solid #aaa;
}
.groups {
    height: 78px;
    display: flex;
}
.group {
    position: relative;
    padding: 13px 15px 0 14px;
}
.group + .group::before {
    content: "";
    position: absolute;
    left: 0;
    top: 17px;
    height: 45px;
    border-left: 1px solid #d4d6d8;
}
.group:nth-child(2) {
    padding-right: 14px;
}
.group-title {
    display: block;
    font-size: 13px;
    font-weight: bold;
}
.group-row {
    display: flex;
    align-items: center;
    gap: 7px;
    height: 24px;
    margin-top: 8px;
}
.group-row .combo {
    margin-top: 1px;
}
.to-label {
    margin-left: 11px;
}
.edit-btn {
    display: flex;
    align-items: center;
    gap: 4px;
    width: 52px;
    height: 24px;
    margin-top: 4px;
    padding: 0 2px;
    border: 1px solid #adb0b3;
    background: #e0e1e3;
    white-space: nowrap;
}
.run-group {
    display: flex;
    align-items: center;
    margin: 2px 0 2px auto;
    padding: 0 20px 2px 22px;
    border-left: 1px solid #bbb;
}
.run-group .icon-btn:nth-child(2) {
    margin-left: 16px;
}
.run-group .pressed {
    width: 28px;
    height: 28px;
    margin: 0 8px;
}
.ok-group {
    display: flex;
    gap: 13px;
    margin: 2px 0;
    padding: 21px 22px 0 19px;
    border-left: 1px solid #bbb;
}
.tall-btn {
    display: flex;
    flex-direction: column;
    align-items: center;
    gap: 6px;
    height: 42px;
    border: 0;
    background: none;
}
.tabstrip {
    display: flex;
    height: 19px;
    margin: 0 1px;
    padding-left: 297px;
    background: #e9ebec;
}
.tab {
    width: 76px;
    padding: 2px 0 0 2px;
    border: 0;
    border-right: 1px solid #f8fafc;
    background: #dfe0e2;
}
.tab-on {
    background: #f8fafc;
    color: #111;
}
.help {
    width: 186px;
    height: 76px;
    margin: 11px 0 0 auto;
    padding: 10px 0 0 6px;
    background: #dfe0e2;
    overflow: hidden;
    white-space: nowrap;
    line-height: 12px;
}
.help p {
    margin: 0 0 22px;
}
.help a {
    color: #1c5f8a;
}

/* 主区域 */
.workspace {
    flex: 1;
    min-height: 0;
    display: flex;
}
.tree-panel {
    flex: none;
    width: 353px;
    display: flex;
    flex-direction: column;
    border-right: 3px solid #d5dcdd;
    background: #f8fafc;
}
.tree-tabs {
    display: flex;
    height: 26px;
    background: #d9dfde;
}
.tree-tab {
    width: 30px;
    border: 0;
    background: none;
    display: flex;
    align-items: center;
    justify-content: center;
}
.tree-tab-on {
    background: #f5fafb;
}
.tree-tools {
    display: flex;
    align-items: center;
    gap: 7px;
    height: 32px;
    padding: 0 8px 0 10px;
}
.tree-tools .push {
    margin-left: 9px;
}
.tree-tools .pressed {
    width: 24px;
    height: 24px;
}
.tree-tools .icon-btn + .icon-btn {
    margin-left: 1px;
}
.tree-tools .icon-btn.last {
    margin-left: auto;
}
.vline {
    height: 24px;
    margin-left: -2px;
    border-left: 1px solid #adb0b3;
}
.vline + .icon-btn + .icon-btn + .vline {
    margin-left: 0;
}
.tree-filter {
    display: flex;
    align-items: center;
    gap: 6px;
    height: 24px;
    padding-left: 10px;
}
.filter-box {
    display: flex;
    width: 272px;
    height: 24px;
    margin-left: -2px;
    padding-right: 5px;
    border: 1px solid #adb5b8;
    background: #fff;
}
.filter-box input {
    flex: 1;
    min-width: 0;
    border: 0;
    outline: 0;
}
.filter-box + svg {
    margin-right: 6px;
}
.tree-body {
    flex: 1;
    margin: 4px 5px 0 6px;
    background: linear-gradient(#e4e8ea, #e4e8ea) 129px 0 / 1px 100% no-repeat;
}
.tree {
    width: 100%;
    table-layout: fixed;
    border-collapse: collapse;
}
.c-name {
    width: 130px;
}
.c-common {
    width: 100px;
}
.c-mat {
    width: 60px;
}
.tree th {
    height: 19px;
    padding: 4px 0 0 4px;
    border-right: 1px solid #d0d3d5;
    border-bottom: 1px solid #d0d3d5;
    background: #fbfbfb;
    color: #111;
    font-weight: normal;
    line-height: 14px;
    text-align: left;
}
.tree th:last-child {
    border-right: 0;
}
.tree td {
    height: 16px;
    padding: 0 0 0 1px;
    white-space: nowrap;
}
.tree .root div {
    display: flex;
    align-items: center;
    gap: 6px;
    padding-left: 2px;
}
.tree td.mat {
    padding: 0;
}
.tree .combo {
    width: 60px;
    height: 18px;
    margin: -1px 0;
}
.tree .combo select {
    padding: 0 0 0 2px;
}
.node {
    display: flex;
    align-items: center;
    gap: 5px;
    height: 16px;
    padding-left: 7px;
}
.branch {
    margin-right: -2px;
}
.new-curve {
    display: flex;
    align-items: center;
    gap: 2px;
}
.new-curve .mono {
    margin-left: 5px;
}
.tree .insert-row td {
    height: 14px;
    padding: 0 0 0 3px;
}
.insert-line {
    position: relative;
    border-top: 2px solid #6cc35a;
}
.insert-line::before {
    content: "";
    position: absolute;
    left: 0;
    top: -4px;
    border: 3px solid transparent;
    border-left-color: #6cc35a;
    border-right: 0;
}
.scrollbars {
    display: flex;
    height: 15px;
    margin: 0 5px 6px 6px;
}
.sb {
    flex: 1;
    display: flex;
    border: 1px solid #d3d5d8;
    background: #f8f8f8;
}
.sb-off {
    flex: none;
    width: 130px;
}
.sb i {
    flex: none;
    display: flex;
    align-items: center;
    justify-content: center;
    width: 14px;
}
.sb i::before {
    content: "";
    border: 4px solid transparent;
    border-right-color: #888;
    border-left: 0;
}
.sb .sb-right::before {
    border-left: 4px solid #888;
    border-right: 0;
}
.sb b {
    flex: 1;
    border: 1px solid #d3d5d8;
    border-width: 0 1px;
    background: #dfe0e2;
}
.sb-off b {
    background: #f8fafc;
}
.sb span {
    display: block;
    width: 74%;
    height: 13px;
    border: 1px solid #bbb;
    background: #f8f8f8;
}
.viewport {
    flex: 1;
    position: relative;
    overflow: hidden;
    background: linear-gradient(#9d9b8f, #c2c0b3 50%, #e3e1d4);
}
.scene text {
    font-family: "Liberation Mono", monospace;
    font-size: 14px;
    fill: #a9713a;
}
.scene .ax-x {
    fill: #e8483c;
}
.scene .ax-y {
    fill: #35dd3a;
}
.scene .ax-z {
    fill: #4ff0ee;
}
.ref-panel {
    position: absolute;
    left: 1px;
    top: 0;
    width: 138px;
    height: 79px;
    padding: 7px 16px;
    display: flex;
    flex-direction: column;
    background: #fbfbfb;
    border: 1px solid #d0d5d5;
}
.ref-panel svg {
    align-self: center;
    margin: 0 0 20px;
}
.ref-panel input {
    width: 104px;
    height: 18px;
    padding: 0 5px;
    border: 1px solid #adb0b3;
    outline: 2px solid #fff;
    outline-offset: -3px;
    background: #e9f9dc;
    color: #222;
}
.view-tools {
    position: absolute;
    left: 490px;
    top: 8px;
    display: flex;
    align-items: center;
    gap: 9px;
    height: 30px;
    padding: 0 6px;
    background: #fafafb;
}
.status {
    flex: none;
    display: flex;
    align-items: center;
    gap: 5px;
    height: 25px;
    padding: 6px 0 0 94px;
    border-top: 1px solid #b0b8b8;
    background: #f5fafb;
    font-size: 11px;
}
.status i {
    width: 5px;
    height: 5px;
    border-radius: 50%;
    background: #1c5e80;
}

/* 方程窗口 */
.dialog {
    position: absolute;
    right: 141px;
    top: 88px;
    bottom: 7px;
    width: 637px;
    display: flex;
    flex-direction: column;
    border: 1px solid #a3a6a8;
    border-radius: 8px;
    background: #eeeff1;
    box-shadow: 0 4px 16px rgba(0, 0, 0, .3);
    overflow: hidden;
}
.dlg-title {
    flex: none;
    position: relative;
    height: 28px;
    background: #d9dddd;
    color: #222;
    line-height: 32px;
    text-align: center;
}
.dlg-win {
    position: absolute;
    right: 9px;
    top: 10px;
    display: flex;
    gap: 11px;
}
.dlg-menu {
    flex: none;
    display: flex;
    gap: 17px;
    height: 27px;
    padding: 0 9px;
    border-bottom: 1px solid #c6c8cb;
    font-size: 13px;
    line-height: 28px;
}
.dlg-menu a {
    color: #222;
    text-decoration: none;
}
.dlg-content {
    flex: 1;
    display: flex;
    flex-direction: column;
    padding: 0 10px 16px 11px;
}
.sec {
    display: flex;
    align-items: center;
    gap: 8px;
    margin: 0;
    padding-left: 4px;
    color: #222;
    font-size: 12px;
    font-weight: normal;
}
.sec-rel {
    margin-top: 31px;
}
.rel-tools {
    display: flex;
    align-items: center;
    gap: 13px;
    height: 28px;
    margin-top: 1px;
    padding-left: 5px;
}
.rel-tools .pressed {
    width: 28px;
    height: 28px;
    margin: 0 -2px 0 -4px;
}
.eq {
    width: 18px;
    font-size: 16px;
    font-weight: bold;
}
.svg-s {
    font-size: 9px;
    fill: #333;
}
.fx {
    display: flex;
    align-items: center;
    gap: 4px;
}
.fx .icon-btn {
    font-family: "Liberation Serif", serif;
    font-size: 18px;
    font-style: italic;
    font-weight: bold;
}
.fx small {
    font-size: 14px;
}
.info {
    width: 14px;
    height: 16px;
    background: #41538f;
    color: #fff;
    font-family: "Liberation Serif", serif;
    font-size: 14px;
    font-weight: bold;
}
.editor {
    flex: 1;
    position: relative;
    display: flex;
    padding-right: 4px;
}
.ops {
    width: 20px;
    display: flex;
    flex-direction: column;
}
.ops button {
    height: 22px;
    border: 0;
    background: none;
    font-family: "Liberation Mono", monospace;
    font-size: 10px;
}
.editor textarea {
    flex: 1;
    padding: 4px 3px;
    border: 1px solid #a9abad;
    resize: none;
    outline: 0;
    line-height: 16px;
}
.note {
    position: absolute;
    left: 98px;
    top: 91px;
    color: #dd2a1f;
    font-family: "Open Sans", sans-serif;
    font-size: 27px;
    line-height: 35px;
    pointer-events: none;
}
.splitter {
    height: 6px;
    margin-top: 1px;
    border-top: 1px solid #d2d4d6;
    border-bottom: 2px solid #b9bcbe;
}
.sec-par {
    margin: 6px 0 2px;
}
.params {
    padding: 3px 0 6px 7px;
    border: 1px solid #bfc2c4;
}
.filters {
    display: flex;
    align-items: center;
    height: 20px;
    padding: 0 9px 0 1px;
}
.filters .combo {
    flex: 1;
}
.filters .combo select {
    padding-left: 5px;
}
.filters label {
    margin-right: 5px;
}
.filters .child-label {
    margin: 0 0 0 6px;
}
.grid-row {
    display: flex;
    height: 254px;
    margin-top: 2px;
}
.grid-box {
    width: 574px;
    padding: 1px 1px 1px 0;
    border: 1px solid #a9abad;
    background: linear-gradient(#d8d8d8, #d8d8d8) 0 1px / 16px 250px no-repeat #fff;
}
.grid {
    width: 100%;
    table-layout: fixed;
    border-collapse: collapse;
    color: #777;
}
.g-gut {
    width: 16px;
}
.g-c {
    width: 56px;
}
.grid th {
    height: 18px;
    padding: 3px 0 0 10px;
    border-right: 1px solid #d0d0d0;
    border-bottom: 1px solid #d0d0d0;
    background: #fbfbfb;
    color: #222;
    font-weight: normal;
    line-height: 14px;
    text-align: left;
    white-space: nowrap;
}
.grid td {
    height: 25px;
    padding: 0 0 0 3px;
    border-right: 1px solid #e6e6e6;
    border-bottom: 1px solid #e6e6e6;
    white-space: nowrap;
}
.grid .gut {
    padding: 0;
    background: #d8d8d8;
}
.grid td.rest {
    border: 0;
}
.grid td.sel {
    outline: 1px dotted #222;
    outline-offset: -1px;
    background: #aee3ff;
    color: #222;
}
.fade {
    overflow: hidden;
    mask-image: linear-gradient(to right, #000 70%, transparent);
}
.lock {
    display: inline-block;
    margin: 0 1px 0 2px;
    vertical-align: -2px;
}
.grid .chk {
    padding: 0;
    text-align: center;
}
.chk input {
    appearance: none;
    width: 12px;
    height: 12px;
    margin: 0;
    border: 1px solid #ddd;
    vertical-align: middle;
}
.movers {
    display: flex;
    flex-direction: column;
    gap: 12px;
    padding: 108px 0 0 6px;
}
.grid-tools {
    display: flex;
    gap: 4px;
    height: 28px;
    padding-right: 10px;
}
.sq {
    display: flex;
    align-items: center;
    justify-content: center;
    width: 28px;
    height: 28px;
    border: 1px solid #b5b8ba;
    background: #f8f8f8;
}
.sq-off {
    border-color: #d0d2d4;
    background: #e6e7e9;
}
.btn {
    width: 68px;
    height: 20px;
    border: 1px solid #adb0b3;
    background: #f8f8f8;
    line-height: 18px;
}
.grid-tools .props {
    width: 62px;
    margin: 2px 0 0 auto;
}
.dlg-foot {
    flex: none;
    display: flex;
    gap: 8px;
    height: 42px;
    padding: 10px 10px 0 11px;
    border-top: 1px solid #c6c8cb;
}
.dlg-foot .btn-ok {
    margin-left: auto;
    border-color: #7cc4e4;
    background: #a2e1ff;
}

/* 水印 */
.watermark {
    position: absolute;
    right: 18px;
    bottom: 7px;
    width: 167px;
}
.wm-name {
    color: #000;
    font-size: 40px;
    font-style: italic;
    font-weight: 300;
    line-height: 40px;
    white-space: nowrap;
}
.wm-name span {
    color: #ff6b35;
}
.flame {
    position: absolute;
    left: 64px;
    top: -22px;
}
.wm-url {
    color: #8c8c8c;
    font-size: 18px;
    font-style: italic;
    line-height: 18px;
}
```
